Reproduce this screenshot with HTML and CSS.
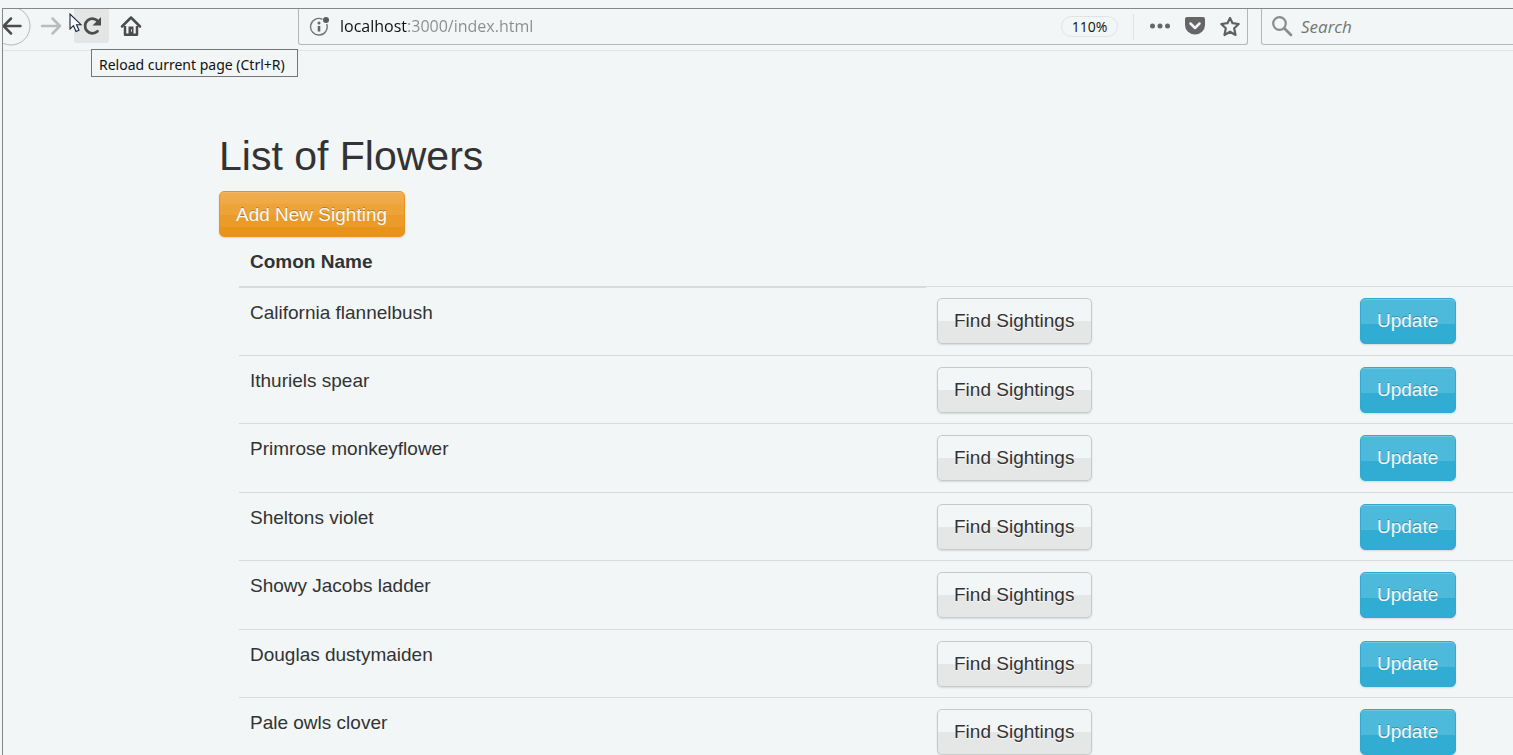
FILE: index.html
```
<!DOCTYPE html>
<html lang="en">
<head>
<meta charset="utf-8">
<title>List of Flowers</title>
<link rel="stylesheet" href="styles.css">
</head>
<body>
<div class="window">
  <header class="toolbar">
    <nav class="nav">
      <button class="nav-btn back" aria-label="Back"><svg width="29" height="37" viewBox="3 9 29 37"><circle cx="11" cy="26" r="19" fill="none" stroke="#b5b7b8" stroke-width="1"/><path d="M20.500 26H4M11 18.500L3.500 26L11 33.500" fill="none" stroke="#4c4c4c" stroke-width="2.500" stroke-linecap="round"/></svg></button>
      <button class="nav-btn forward" aria-label="Forward" disabled><svg width="22" height="20" viewBox="40 16 22 20"><path d="M42 26H60M52.500 18.500L60 26L52.500 33.500" fill="none" stroke="#b9bbbc" stroke-width="2.500" stroke-linecap="round" stroke-linejoin="round"/></svg></button>
      <button class="nav-btn reload" aria-label="Reload" aria-describedby="reload-tip"><svg width="20" height="20" viewBox="82 16 20 20"><path d="M98.500 22A7.300 7.300 0 1 0 97.500 31.200" fill="none" stroke="#4c4c4c" stroke-width="2.700" stroke-linecap="round"/><path d="M101 17V25.500H92.500Z" fill="#4c4c4c"/></svg></button>
      <button class="nav-btn home" aria-label="Home"><svg width="22" height="22" viewBox="120 15 22 22"><path d="M122 26.500L131 17.500L140 26.500" fill="none" stroke="#4c4c4c" stroke-width="2.500" stroke-linecap="round" stroke-linejoin="round"/><path d="M125 26V34.700H137V26" fill="none" stroke="#4c4c4c" stroke-width="2.500" stroke-linejoin="round"/><path d="M128.500 34V26.500H133.500V34Z" fill="#4c4c4c"/><path d="M131 29.500h1v2h-1z" fill="#f1f5f7"/></svg></button>
      <svg class="pointer" width="14" height="22" viewBox="0 0 14 22"><path d="M1 1V16L4.500 12.700L7 18.500L10 17.200L7.500 11.700H12Z" fill="#f8fbfc" stroke="#1d2340" stroke-width="1.100"/></svg>
      <div class="tooltip" id="reload-tip" role="tooltip">Reload current page (Ctrl+R)</div>
    </nav>
    <div class="field address">
      <svg width="20" height="20" viewBox="309 16 20 20"><path d="M322.500 18.300A8.300 8.300 0 1 0 326.700 23" fill="none" stroke="#757575" stroke-width="1.400"/><circle cx="326" cy="19" r="3" fill="#5c5c5c"/><circle cx="319" cy="22" r="1.500" fill="#666"/><path d="M317.700 25h2.600v5.500h-2.600z" fill="#666"/></svg>
      <input class="url" type="text" value="localhost:3000/index.html" aria-label="Address">
      <button class="zoom">110%</button>
      <span class="divider"></span>
      <button class="tool" aria-label="Page actions"><svg width="20" height="20" viewBox="0 0 20 20"><g fill="#666"><circle cx="2.500" cy="9" r="2.500"/><circle cx="10" cy="9" r="2.500"/><circle cx="17.500" cy="9" r="2.500"/></g></svg></button>
      <button class="tool" aria-label="Save to Pocket"><svg width="20" height="20" viewBox="0 0 20 20"><path d="M2 0H18Q20 0 20 2V8A10 9.500 0 0 1 0 8V2Q0 0 2 0Z" fill="#666"/><path d="M5.500 6.500L10 11L14.500 6.500" fill="none" stroke="#f1f5f7" stroke-width="2.500" stroke-linecap="round" stroke-linejoin="round"/></svg></button>
      <button class="tool" aria-label="Bookmark"><svg width="20" height="20" viewBox="0 1 20 20"><path d="M10 1.900L12.500 7.200L18.700 8L14.200 12.200L15.500 19L10 15.700L4.500 19L5.800 12.200L1.300 8L7.500 7.200Z" fill="none" stroke="#606060" stroke-width="2.200" stroke-linejoin="round"/></svg></button>
    </div>
    <div class="field search">
      <svg width="22" height="22" viewBox="0 1 22 22"><circle cx="8.500" cy="8.500" r="6.300" fill="none" stroke="#8b8b8b" stroke-width="2.200"/><path d="M13.500 13.500L20 20" stroke="#8b8b8b" stroke-width="2.600" stroke-linecap="round"/></svg>
      <input class="search-input" type="text" placeholder="Search" aria-label="Search">
    </div>
  </header>
  <main class="page">
    <h1 class="title">List of Flowers</h1>
    <button class="btn btn-warning">Add New Sighting</button>
    <table class="flowers">
      <colgroup><col class="col-name"><col class="col-find"><col></colgroup>
      <thead><tr><th>Comon Name</th><td></td><td></td></tr></thead>
      <tbody>
        <tr><td>California flannelbush</td><td><button class="btn">Find Sightings</button></td><td><button class="btn btn-info">Update</button></td></tr>
        <tr><td>Ithuriels spear</td><td><button class="btn">Find Sightings</button></td><td><button class="btn btn-info">Update</button></td></tr>
        <tr><td>Primrose monkeyflower</td><td><button class="btn">Find Sightings</button></td><td><button class="btn btn-info">Update</button></td></tr>
        <tr><td>Sheltons violet</td><td><button class="btn">Find Sightings</button></td><td><button class="btn btn-info">Update</button></td></tr>
        <tr><td>Showy Jacobs ladder</td><td><button class="btn">Find Sightings</button></td><td><button class="btn btn-info">Update</button></td></tr>
        <tr><td>Douglas dustymaiden</td><td><button class="btn">Find Sightings</button></td><td><button class="btn btn-info">Update</button></td></tr>
        <tr><td>Pale owls clover</td><td><button class="btn">Find Sightings</button></td><td><button class="btn btn-info">Update</button></td></tr>
      </tbody>
    </table>
  </main>
</div>
</body>
</html>
```
FILE: styles.css
```
* { box-sizing: border-box; }
html, body { height: 100%; }
body {
  margin: 0;
  padding: 8px 0 0 2px;
  overflow: hidden;
  background: #f2f6f7;
  color: #333;
  font-family: "Liberation Sans", Arial, sans-serif;
  font-size: 19px;
  line-height: 27px;
}
button, input { font: inherit; margin: 0; }
svg { display: block; flex: none; }

.window { min-height: 100%; border: solid #858788; border-width: 1px 0 0 1px; }

.toolbar {
  display: flex;
  align-items: flex-start;
  height: 42px;
  border-bottom: 1px solid #e0e4e5;
  font-family: "Open Sans", "Noto Sans", sans-serif;
}
.nav { position: relative; display: flex; width: 295px; }
.nav-btn {
  display: flex;
  align-items: center;
  justify-content: center;
  height: 34px;
  padding: 0;
  border: 0;
  background: none;
}
.back { width: 29px; height: 37px; }
.forward { width: 42px; padding-right: 4px; }
.reload { width: 35px; border-radius: 0 0 2px 2px; background: #e4e6e6; }
.home { width: 44px; }
.pointer { position: absolute; left: 66px; top: 4px; }
.tooltip {
  position: absolute;
  left: 88px;
  top: 40px;
  padding: 1px 12px 0 7px;
  height: 28px;
  border: 1px solid #757575;
  background: #f2f6f7;
  color: #111;
  font-family: "Noto Sans", sans-serif;
  font-size: 14px;
  white-space: nowrap;
}

.field {
  display: flex;
  align-items: center;
  height: 36px;
  border: solid #b4b6b7;
  border-width: 0 1px 1px;
  border-radius: 0 0 3px 3px;
}
.address { flex: 1; padding: 0 7px 0 10px; }
.url {
  flex: 1;
  min-width: 0;
  height: 27px;
  margin-left: 11px;
  padding: 0;
  border: 0;
  background: linear-gradient(to right, #111 67px, #8b8b8b 67px);
  -webkit-background-clip: text;
  background-clip: text;
  color: transparent;
  font-size: 16px;
}
.zoom {
  width: 57px;
  height: 21px;
  padding: 0;
  border: 1px solid #e0e3e4;
  border-radius: 11px;
  background: none;
  color: #111;
  font-size: 14px;
  line-height: 18px;
}
.divider { width: 1px; height: 26px; margin: 0 16px 0 15px; background: #e0e3e4; }
.tool { padding: 0; border: 0; background: none; }
.tool + .tool { margin-left: 15px; }
.search { width: 260px; margin: 0 -8px 0 13px; padding-left: 9px; }
.search-input {
  flex: 1;
  min-width: 0;
  margin-left: 8px;
  padding: 0;
  border: 0;
  background: none;
  font-size: 17px;
  font-style: italic;
}
.search-input::placeholder { color: #757575; opacity: 1; }

.page { padding: 82px 0 0 216px; }
.title { margin: 0 0 12px; font-size: 41px; font-weight: 400; line-height: 46px; }

.btn {
  display: block;
  height: 46px;
  padding: 0 17px 0 16px;
  border: 1px solid #c8caca;
  border-radius: 5px;
  background: linear-gradient(#f2f6f7 50%, #e5e7e7 50%);
  box-shadow: 0 1px 2px rgba(0, 0, 0, 0.12);
  color: #333;
  text-shadow: 0 1px 1px rgba(255, 255, 255, 0.75);
}
.btn-warning, .btn-info { color: #f7f9fa; text-shadow: 0 -1px 0 rgba(0, 0, 0, 0.25); }
.btn-warning {
  border-color: #e8951f;
  background: linear-gradient(#f0ad4e 0, #efa843 27%, #eda338 27%, #eda338 52%, #eb9b2a 52%, #eb9b2a 80%, #e89319 80%);
  box-shadow: inset 0 1px 0 rgba(255, 255, 255, 0.15), 0 1px 2px rgba(0, 0, 0, 0.12);
}
.btn-info {
  border-color: #2fabd2;
  background: linear-gradient(#4db9db 56%, #31acd3 56%);
  box-shadow: inset 0 1px 0 rgba(255, 255, 255, 0.2), 0 1px 2px rgba(0, 0, 0, 0.12);
}

.flowers {
  width: calc(100% - 20px);
  margin-left: 20px;
  border-collapse: separate;
  border-spacing: 0;
  table-layout: fixed;
}
.flowers .btn { padding-bottom: 2px; }
.col-name { width: 687px; }
.col-find { width: 423px; }
.flowers th { padding: 11px; text-align: left; vertical-align: top; }
.flowers td { height: 68px; padding: 11px 11px 0; border-top: 1px solid #d8dadb; vertical-align: top; }
.flowers thead td { height: 49px; border-top: 0; }
.flowers tbody tr:nth-child(odd) td { height: 69px; }
.flowers tbody tr:first-child td:first-child { border-top-width: 2px; }
```
